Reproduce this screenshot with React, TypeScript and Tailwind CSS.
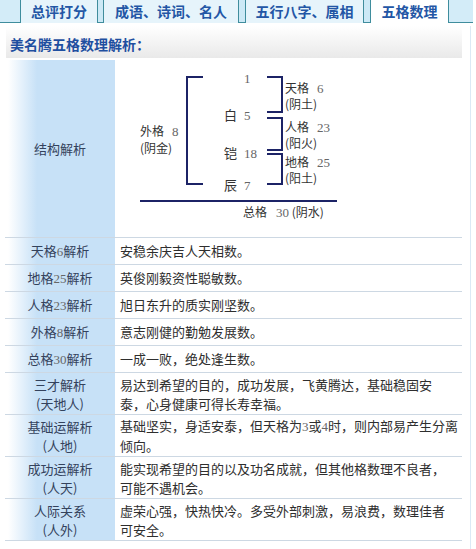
import { Fragment, type ReactNode } from 'react';

const cjk = "font-['Noto_Sans_CJK_SC','Noto_Sans',sans-serif]";

function Num({ children }: { children: ReactNode }) {
    return <span className="font-['Liberation_Serif',serif] text-[#666666] text-[13px]">{children}</span>;
}

function Tab({ width, active, children }: { width: string; active?: boolean; children: ReactNode }) {
    return (
        <div
            className={`${width} flex items-center justify-center pb-[1px] text-[14px] font-bold text-[#2356a5] ${
                active ? 'bg-white' : 'bg-[#e6f4fb]'
            }`}
        >
            {children}
        </div>
    );
}

function TabGap({ width }: { width: string }) {
    return <div className={`${width} bg-[#cce9f6] border-x border-b border-[#3f8d9d]`} />;
}

// one-line rows under the diagram
const simpleRows = [
    { name: '天格', num: '6', text: '安稳余庆吉人天相数。' },
    { name: '地格', num: '25', text: '英俊刚毅资性聪敏数。' },
    { name: '人格', num: '23', text: '旭日东升的质实刚坚数。' },
    { name: '外格', num: '8', text: '意志刚健的勤勉发展数。' },
    { name: '总格', num: '30', text: '一成一败，绝处逢生数。' },
];

const longRows: { label: string; sub: string; lines: ReactNode[] }[] = [
    {
        label: '三才解析',
        sub: '(天地人)',
        lines: ['易达到希望的目的，成功发展，飞黄腾达，基础稳固安', '泰，心身健康可得长寿幸福。'],
    },
    {
        label: '基础运解析',
        sub: '(人地)',
        lines: [
            <>
                基础坚实，身适安泰，但天格为<Num>3</Num>或<Num>4</Num>时，则内部易产生分离
            </>,
            '倾向。',
        ],
    },
    {
        label: '成功运解析',
        sub: '(人天)',
        lines: ['能实现希望的目的以及功名成就，但其他格数理不良者，', '可能不遇机会。'],
    },
    {
        label: '人际关系',
        sub: '(人外)',
        lines: ['虚荣心强，快热快冷。多受外部刺激，易浪费，数理佳者', '可安全。'],
    },
];

const labelCell =
    'w-[110px] shrink-0 flex flex-col items-center justify-center text-center text-[13px] text-[#34425c] bg-[linear-gradient(to_right,#ffffff_0px,#ffffff_3px,#c7e1f7_32px)]';

function Diagram() {
    const t = 'absolute -translate-y-1/2 leading-none whitespace-nowrap';
    return (
        <div className="relative flex-1 h-[177px] text-[12px] text-[#333333]">
            <svg className="absolute inset-0" width="347" height="177" fill="none" stroke="#1c2366" strokeWidth="2">
                <path d="M88 17H72V124H88" />
                <path d="M152 17H167V52H152" />
                <path d="M152 58H167V90H152" />
                <path d="M152 94H167V124H152" />
                <path d="M25 141H222" />
            </svg>

            <span className={`${t} left-[129px] top-[18px]`}><Num>1</Num></span>
            <span className={`${t} left-[109px] top-[55px] text-[13px]`}>白<span className="ml-[7px]"><Num>5</Num></span></span>
            <span className={`${t} left-[109px] top-[93px] text-[13px]`}>铠<span className="ml-[7px]"><Num>18</Num></span></span>
            <span className={`${t} left-[109px] top-[125px] text-[13px]`}>辰<span className="ml-[7px]"><Num>7</Num></span></span>

            <span className={`${t} left-[25px] top-[71px]`}>外格<span className="ml-[8px]"><Num>8</Num></span></span>
            <span className={`${t} left-[25px] top-[88px]`}>(阴金)</span>

            <span className={`${t} left-[170px] top-[28px]`}>天格<span className="ml-[8px]"><Num>6</Num></span></span>
            <span className={`${t} left-[170px] top-[44px]`}>(阴土)</span>
            <span className={`${t} left-[170px] top-[67px]`}>人格<span className="ml-[8px]"><Num>23</Num></span></span>
            <span className={`${t} left-[170px] top-[83px]`}>(阳火)</span>
            <span className={`${t} left-[170px] top-[102px]`}>地格<span className="ml-[8px]"><Num>25</Num></span></span>
            <span className={`${t} left-[170px] top-[118px]`}>(阳土)</span>

            <span className={`${t} left-[128px] top-[152px]`}>
                总格<span className="ml-[9px]"><Num>30</Num></span> (阴水)
            </span>
        </div>
    );
}

export default function App() {
    return (
        <div className={`w-[476px] h-[549px] bg-white overflow-hidden ${cjk}`}>
            {/* tab bar */}
            <div className="flex h-[23px]">
                <div className="w-[21px] bg-[#d3ecf8] border-r border-b border-[#3f8d9d]" />
                <Tab width="w-[76px]">总评打分</Tab>
                <TabGap width="w-[7px]" />
                <Tab width="w-[134px]">成语、诗词、名人</Tab>
                <TabGap width="w-[8px]" />
                <Tab width="w-[117px]">五行八字、属相</Tab>
                <TabGap width="w-[8px]" />
                <Tab width="w-[77px]" active>五格数理</Tab>
                <div className="w-[25px] bg-[#d3ecf8] border-l border-b border-[#3f8d9d]" />
            </div>

            <div className="w-[471px] h-[526px] border-r border-[#dbe9f5]">
                {/* heading */}
                <div className="ml-[6px] mt-[3px] w-[456px] h-[32px] pt-[10px] pl-[4px] bg-linear-to-b from-white to-[#e9e9e9]">
                    <div className="text-[14px] leading-[16px] font-bold text-[#1f4fa0]">美名腾五格数理解析：</div>
                </div>

                {/* table */}
                <div className="ml-[5px] mt-[2px] w-[457px]">
                    <div className="flex border-b border-[#cdd8e3]">
                        <div className={labelCell}>结构解析</div>
                        <Diagram />
                    </div>

                    {simpleRows.map((r) => (
                        <div key={r.name} className="flex h-[27px] border-b border-[#cdd8e3]">
                            <div className={labelCell}>
                                <span>
                                    {r.name}
                                    <Num>{r.num}</Num>解析
                                </span>
                            </div>
                            <div className="flex-1 flex items-center pl-[5px] text-[13px] text-[#2e2e2e]">{r.text}</div>
                        </div>
                    ))}

                    {longRows.map((r) => (
                        <div key={r.label} className="flex h-[42px] border-b border-[#cdd8e3]">
                            <div className={`${labelCell} leading-[19px]`}>
                                <p>
                                    {r.label}
                                    <br />
                                    {r.sub}
                                </p>
                            </div>
                            <div className="flex-1 flex flex-col justify-center pl-[5px] text-[13px] leading-[19px] text-[#2e2e2e] whitespace-nowrap">
                                <p>
                                    {r.lines.map((l, i) => (
                                        <Fragment key={i}>
                                            {i > 0 && <br />}
                                            {l}
                                        </Fragment>
                                    ))}
                                </p>
                            </div>
                        </div>
                    ))}
                </div>
            </div>
        </div>
    );
}
